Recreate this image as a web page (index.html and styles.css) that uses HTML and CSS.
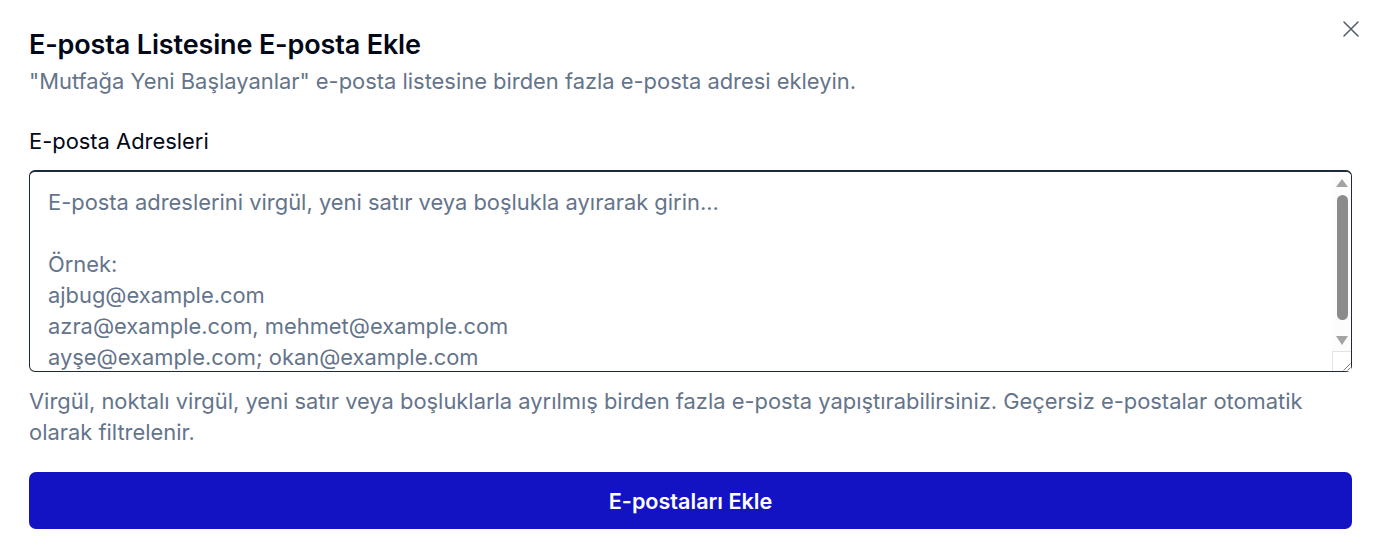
FILE: index.html
```html
<!DOCTYPE html>
<html lang="tr">
<head>
<meta charset="utf-8">
<title>E-posta Ekle</title>
<link rel="stylesheet" href="styles.css">
</head>
<body>
<div class="dialog">
  <button class="close" aria-label="Kapat">
    <svg width="16" height="16" viewBox="0 0 16 16" fill="none" stroke="currentColor" stroke-width="1.5" stroke-linecap="round"><path d="M1 1L15 15M15 1L1 15"/></svg>
  </button>
  <h2 class="title">E-posta Listesine E-posta Ekle</h2>
  <p class="subtitle">"Mutfağa Yeni Başlayanlar" e-posta listesine birden fazla e-posta adresi ekleyin.</p>
  <label class="label" for="emails">E-posta Adresleri</label>
  <div class="field-wrap">
    <textarea id="emails" class="field" placeholder="E-posta adreslerini virgül, yeni satır veya boşlukla ayırarak girin...&#10;&#10;Örnek:&#10;ajbug@example.com&#10;azra@example.com, mehmet@example.com&#10;ayşe@example.com; okan@example.com"></textarea>
    <div class="scrollbar" aria-hidden="true">
      <svg class="arrow" width="12" height="8" viewBox="0 0 12 8"><path d="M6 0L12 8H0Z" fill="#a3a3a3"/></svg>
      <div class="thumb"></div>
      <svg class="arrow down" width="12" height="9" viewBox="0 0 12 9"><path d="M6 9L12 0H0Z" fill="#a3a3a3"/></svg>
      <div class="corner">
        <svg width="10" height="10" viewBox="0 0 10 10" fill="none" stroke="#7d7d7d" stroke-width="1"><path d="M9.5 2.5L2.5 9.5M9.5 6.5L6.5 9.5"/></svg>
      </div>
    </div>
  </div>
  <p class="help">Virgül, noktalı virgül, yeni satır veya boşluklarla ayrılmış birden fazla e-posta yapıştırabilirsiniz. Geçersiz e-postalar otomatik olarak filtrelenir.</p>
  <button class="submit">E-postaları Ekle</button>
</div>
</body>
</html>
```

FILE: styles.css
```css
html, body {
  margin: 0;
  background: #ffffff;
}
body {
  font-family: Inter, "Noto Sans", "Liberation Sans", sans-serif;
  color: #0f172a;
}
.dialog {
  position: relative;
  padding: 27px 27px 0 29px;
  display: flex;
  flex-direction: column;
}
.close {
  position: absolute;
  top: 21px;
  right: 20px;
  width: 16px;
  height: 16px;
  padding: 0;
  border: 0;
  background: none;
  color: #545b68;
  display: flex;
}
.title {
  margin: 0;
  font-size: 27px;
  line-height: 35px;
  font-weight: 600;
  letter-spacing: -0.15px;
  color: #020817;
}
.subtitle {
  margin: 4px 0 0;
  font-size: 21.9px;
  line-height: 31px;
  color: #64748b;
}
.label {
  margin-top: 31px;
  font-size: 21.9px;
  line-height: 27px;
  font-weight: 400;
  color: #020817;
}
.field-wrap {
  position: relative;
  margin-top: 15px;
  height: 202px;
}
.field {
  display: block;
  box-sizing: border-box;
  width: 100%;
  height: 202px;
  padding: 15px 18px;
  border: 1px solid #1e293b;
  border-top-width: 2px;
  border-radius: 6px;
  font-family: inherit;
  font-size: 21.9px;
  line-height: 31px;
  color: #0f172a;
  background: #fff;
  overflow: hidden;
  resize: none;
  outline: none;
}
.field::placeholder {
  color: #64748b;
}
.scrollbar {
  position: absolute;
  top: 2px;
  right: 1px;
  bottom: 1px;
  width: 19px;
  box-sizing: border-box;
  padding-top: 7px;
  background: #fcfcfc;
  border-top-right-radius: 5px;
  display: flex;
  flex-direction: column;
  align-items: center;
}
.arrow {
  display: block;
  flex: none;
  margin-left: 1px;
}
.thumb {
  flex: none;
  width: 11px;
  height: 125px;
  margin: 8px 0 0 1px;
  border-radius: 6px;
  background: #8b8b8b;
}
.arrow.down {
  margin-top: 16px;
}
.corner {
  margin-top: 6px;
  align-self: stretch;
  flex: 1;
  box-sizing: border-box;
  border-left: 1px solid #e4e4e4;
  border-top: 1px solid #e4e4e4;
  background: #ffffff;
  display: flex;
  align-items: flex-end;
  justify-content: flex-end;
}
.corner svg {
  display: block;
}
.help {
  margin: 14px 0 0;
  font-size: 21.9px;
  line-height: 31px;
  color: #64748b;
}
.submit {
  margin-top: 24px;
  height: 57px;
  border: 0;
  border-radius: 7px;
  background: #1313c4;
  color: #ffffff;
  font-family: inherit;
  font-size: 21.6px;
  font-weight: 600;
}
```
